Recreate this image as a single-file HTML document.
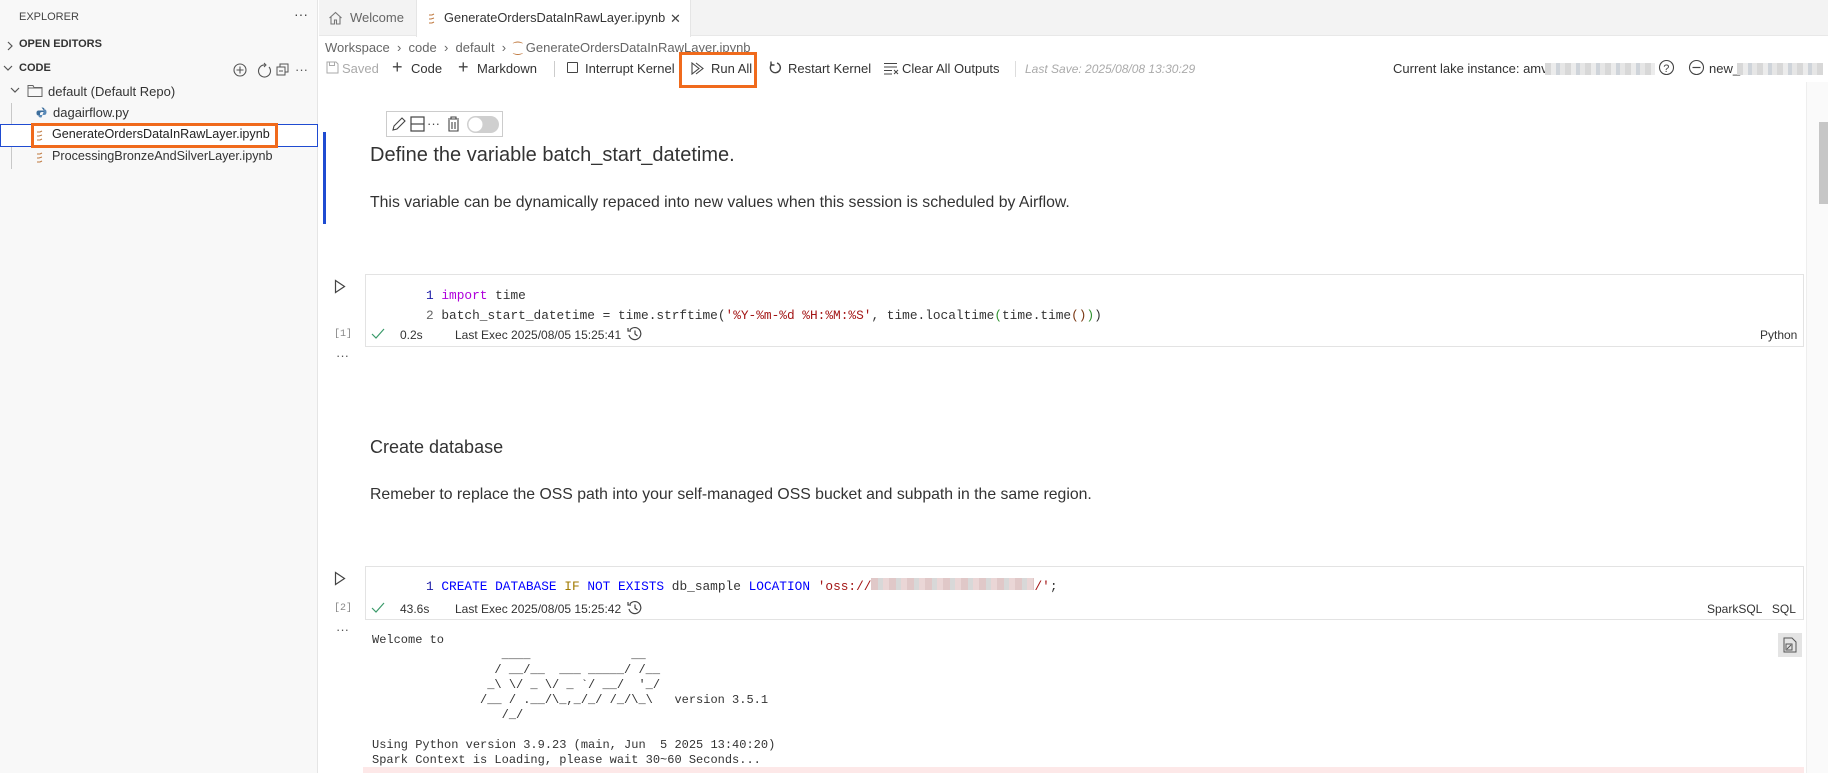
<!DOCTYPE html>
<html><head><meta charset="utf-8">
<style>
*{margin:0;padding:0;box-sizing:border-box}
body{width:1828px;height:773px;overflow:hidden;background:#fff;font-family:"Liberation Sans",sans-serif;color:#333;position:relative;font-size:13px}
.a{position:absolute;white-space:pre}
.mono{font-family:"Liberation Mono",monospace}
.blur{position:absolute;background:repeating-linear-gradient(90deg,#d8d8d8 0 6px,#ececec 6px 11px,#cfd4da 11px 15px,#e6e6e6 15px 20px)}
svg{position:absolute}
</style></head><body>
<!-- sidebar -->
<div class="a" style="left:0;top:0;width:318px;height:773px;background:#f8f8f8;border-right:1px solid #e5e5e5"></div>
<div class="a" style="left:19px;top:11px;font-size:11px;color:#444">EXPLORER</div>
<div class="a" style="left:294px;top:6px;font-size:14px;color:#444">···</div>
<svg style="left:5px;top:40px" width="10" height="12"><path d="M3 2l4 4-4 4" fill="none" stroke="#555" stroke-width="1.2"/></svg>
<div class="a" style="left:19px;top:38px;font-size:11px;font-weight:bold;color:#333">OPEN EDITORS</div>
<svg style="left:3px;top:64px" width="12" height="10"><path d="M1 2l4 4 4-4" fill="none" stroke="#555" stroke-width="1.2"/></svg>
<div class="a" style="left:19px;top:62px;font-size:11px;font-weight:bold;color:#333">CODE</div>
<svg style="left:232px;top:62px" width="80" height="16"><circle cx="8" cy="8" r="6" fill="none" stroke="#555" stroke-width="1.1"/><path d="M8 4.5v7M4.5 8h7" stroke="#555" stroke-width="1.1"/><path d="M33 3a6 6 0 1 0 4 2" fill="none" stroke="#555" stroke-width="1.1"/><path d="M32 1l2 2-2 2" fill="none" stroke="#555" stroke-width="1"/><rect x="45" y="5" width="8" height="8" fill="none" stroke="#555"/><path d="M48 5V2h8v8h-3M47 9h4" fill="none" stroke="#555"/><text x="63" y="12" font-size="13" fill="#555" font-family="Liberation Sans">···</text></svg>
<svg style="left:10px;top:86px" width="12" height="10"><path d="M1 2l4 4 4-4" fill="none" stroke="#555" stroke-width="1.2"/></svg>
<svg style="left:27px;top:84px" width="16" height="14"><path d="M1 1.5h5l1 2h8v9H1z" fill="none" stroke="#666"/><path d="M1 4h14" stroke="#666"/></svg>
<div class="a" style="left:48px;top:84px;font-size:13px;color:#333">default (Default Repo)</div>
<div class="a" style="left:11px;top:103px;width:1px;height:66px;background:#c8c8c8"></div>
<svg style="left:36px;top:107px" width="11" height="11"><path d="M5.5 0.5c3 0 3 1 3 3H3c-2 0-2.5 1-2.5 2.5S1 8.5 3 8.5h1V6.5c0-1 1-1.5 2-1.5h3" fill="#3d6e9c"/><path d="M5.5 10.5c-3 0-3-1-3-2.5h5.5c2 0 2.5-1.5 2.5-3s-.5-2.5-2-2.5" fill="#5a8ab8"/></svg>
<div class="a" style="left:53px;top:105px;font-size:13px;color:#333">dagairflow.py</div>
<div class="a" style="left:0;top:124px;width:318px;height:23px;border:1px solid #1f4bd1;background:#fff"></div>
<div class="a" style="left:31px;top:123px;width:247px;height:25px;border:3px solid #f06a1c"></div>
<svg style="left:36px;top:130px" width="8" height="11"><path d="M1 2h3l2-1M1 6h2l3 -1M1 10h3l2-1" fill="none" stroke="#c07a40" stroke-width="1"/></svg>
<div class="a" style="left:52px;top:127px;font-size:12.6px;color:#222">GenerateOrdersDataInRawLayer.ipynb</div>
<svg style="left:36px;top:152px" width="8" height="11"><path d="M1 2h3l2-1M1 6h2l3 -1M1 10h3l2-1" fill="none" stroke="#c07a40" stroke-width="1"/></svg>
<div class="a" style="left:52px;top:149px;font-size:12.6px;color:#333">ProcessingBronzeAndSilverLayer.ipynb</div>

<!-- tabs -->
<div class="a" style="left:319px;top:0;width:1509px;height:36px;background:#f3f3f3;border-bottom:1px solid #e8e8e8"></div>
<svg style="left:328px;top:11px" width="15" height="14"><path d="M1.5 7L7.5 1.5 13.5 7M3 6v7h3.5V9h2v4H12V6" fill="none" stroke="#777" stroke-width="1.1"/></svg>
<div class="a" style="left:350px;top:10px;font-size:13px;color:#666">Welcome</div>
<div class="a" style="left:416px;top:0;width:275px;height:37px;background:#fff;border-left:1px solid #e5e5e5;border-right:1px solid #e5e5e5"></div>
<svg style="left:428px;top:13px" width="8" height="11"><path d="M1 2h3l2-1M1 6h2l3 -1M1 10h3l2-1" fill="none" stroke="#c07a40" stroke-width="1"/></svg>
<div class="a" style="left:444px;top:10px;font-size:12.8px;color:#333">GenerateOrdersDataInRawLayer.ipynb</div>
<div class="a" style="left:670px;top:11px;font-size:13px;color:#444">✕</div>

<!-- breadcrumb -->
<div class="a" style="left:325px;top:40px;font-size:13px;color:#666">Workspace  ›  code  ›  default  ›  <span style="color:#c07a40;font-size:11px">⁐</span> GenerateOrdersDataInRawLayer.ipynb</div>

<!-- toolbar -->
<svg style="left:326px;top:61px" width="13" height="13"><path d="M1 1h9l2 2v9H1z" fill="none" stroke="#aaa"/><rect x="3.5" y="1" width="5" height="3.5" fill="none" stroke="#aaa"/></svg>
<div class="a" style="left:342px;top:61px;font-size:13px;color:#aaa">Saved</div>
<div class="a" style="left:392px;top:57px;font-size:18px;color:#444;font-weight:300">+</div>
<div class="a" style="left:411px;top:61px;font-size:13px;color:#333">Code</div>
<div class="a" style="left:458px;top:57px;font-size:18px;color:#444">+</div>
<div class="a" style="left:477px;top:61px;font-size:13px;color:#333">Markdown</div>
<div class="a" style="left:554px;top:61px;width:1px;height:16px;background:#ccc"></div>
<div class="a" style="left:567px;top:62px;width:11px;height:11px;border:1.2px solid #444;border-radius:1px"></div>
<div class="a" style="left:585px;top:61px;font-size:13px;color:#333">Interrupt Kernel</div>
<div class="a" style="left:679px;top:52px;width:78px;height:36px;border:3px solid #f06a1c"></div>
<svg style="left:691px;top:62px" width="16" height="13"><path d="M1 1l7 5.5-7 5.5z M5 1l7 5.5-7 5.5" fill="none" stroke="#444" stroke-width="1.1"/></svg>
<div class="a" style="left:711px;top:61px;font-size:13px;color:#333">Run All</div>
<svg style="left:768px;top:61px" width="14" height="14"><path d="M4 3a5 5 0 1 0 5-1" fill="none" stroke="#444" stroke-width="1.4"/><path d="M3 0.5v3.5h3.5" fill="none" stroke="#444" stroke-width="1.4"/></svg>
<div class="a" style="left:788px;top:61px;font-size:13px;color:#333">Restart Kernel</div>
<svg style="left:883px;top:62px" width="16" height="13"><path d="M1 1.5h13M1 5h13M1 8.5h8M1 12h8M11 8l4 4M15 8l-4 4" fill="none" stroke="#444" stroke-width="1"/></svg>
<div class="a" style="left:902px;top:61px;font-size:13px;color:#333">Clear All Outputs</div>
<div class="a" style="left:1015px;top:61px;width:1px;height:16px;background:#ddd"></div>
<div class="a" style="left:1025px;top:62px;font-size:12px;color:#aaa;font-style:italic">Last Save: 2025/08/08 13:30:29</div>
<div class="a" style="left:1393px;top:61px;font-size:13px;color:#333">Current lake instance: amv</div>
<div class="blur" style="left:1545px;top:63px;width:110px;height:12px"></div>
<svg style="left:1658px;top:59px" width="17" height="17"><circle cx="8.5" cy="8.5" r="7" fill="none" stroke="#444" stroke-width="1.1"/><text x="5.3" y="13" font-size="11" fill="#444" font-family="Liberation Sans">?</text></svg>
<svg style="left:1688px;top:59px" width="17" height="17"><circle cx="8.5" cy="8.5" r="7" fill="none" stroke="#444" stroke-width="1.1"/><path d="M4.5 8.5h8" stroke="#444" stroke-width="1.2"/></svg>
<div class="a" style="left:1709px;top:61px;font-size:13px;color:#333">new_</div>
<div class="blur" style="left:1737px;top:63px;width:86px;height:12px"></div>

<!-- scrollbar -->
<div class="a" style="left:1806px;top:82px;width:22px;height:691px;background:#fafafa;border-left:1px solid #eee"></div>
<div class="a" style="left:1819px;top:122px;width:9px;height:82px;background:#c6c6c6"></div>

<!-- markdown cell 1 -->
<div class="a" style="left:386px;top:111px;width:117px;height:26px;border:1px solid #ccc;background:#fff"></div>
<svg style="left:391px;top:115px" width="110" height="18"><path d="M2 15l1-4 8-8 3 3-8 8z" fill="none" stroke="#444" stroke-width="1.1"/><rect x="20" y="2" width="13" height="14" fill="none" stroke="#444" stroke-width="1.2"/><path d="M20 9h13" stroke="#444" stroke-width="1.2"/><text x="36" y="13" font-size="13" fill="#444" font-family="Liberation Sans">···</text><path d="M57 4h11M60 4V2h5v2M58 5v11h9V5M61 7v7M64 7v7" fill="none" stroke="#444" stroke-width="1.1"/><rect x="76" y="1" width="32" height="17" rx="8.5" fill="#cfcfcf"/><circle cx="84.5" cy="9.5" r="7" fill="#fff"/></svg>
<div class="a" style="left:323px;top:132px;width:3px;height:92px;background:#1f4bd1"></div>
<div class="a" style="left:370px;top:144px;font-size:20px;color:#333">Define the variable batch_start_datetime.</div>
<div class="a" style="left:370px;top:194px;font-size:15.8px;color:#333">This variable can be dynamically repaced into new values when this session is scheduled by Airflow.</div>

<!-- code cell 1 -->
<svg style="left:334px;top:279px" width="12" height="15"><path d="M1.5 1.5l9 6-9 6z" fill="none" stroke="#444" stroke-width="1.2"/></svg>
<div class="a" style="left:365px;top:274px;width:1439px;height:73px;border:1px solid #e3e3e3"></div>
<div class="a mono" style="left:426px;top:286px;font-size:12.8px;line-height:20px;color:#333"><span style="color:#1a1aa6">1</span> <span style="color:#af00db">import</span> time
<span style="color:#666">2</span> batch_start_datetime = time.strftime(<span style="color:#a31515">'%Y-%m-%d %H:%M:%S'</span>, time.localtime<span style="color:#319331">(</span>time.time<span style="color:#7b3814">()</span><span style="color:#319331">)</span>)</div>
<div class="a mono" style="left:334px;top:329px;font-size:10px;color:#888">[1]</div>
<svg style="left:371px;top:328px" width="14" height="12"><path d="M1 6l4 4 8-9" fill="none" stroke="#3a9a6a" stroke-width="1.2"/></svg>
<div class="a" style="left:400px;top:328px;font-size:12px;color:#333">0.2s</div>
<div class="a" style="left:455px;top:328px;font-size:12px;color:#333">Last Exec 2025/08/05 15:25:41</div>
<svg style="left:627px;top:326px" width="16" height="16"><path d="M3 4a6 6 0 1 1-1 5" fill="none" stroke="#444" stroke-width="1.2"/><path d="M1 2v3h3M8 4.5V8l2.5 2" fill="none" stroke="#444" stroke-width="1.2"/></svg>
<div class="a" style="left:1760px;top:328px;font-size:12px;color:#333">Python</div>
<div class="a" style="left:336px;top:348px;font-size:13px;color:#555">···</div>

<!-- markdown cell 2 -->
<div class="a" style="left:370px;top:437px;font-size:18px;color:#333">Create database</div>
<div class="a" style="left:370px;top:486px;font-size:15.8px;color:#333">Remeber to replace the OSS path into your self-managed OSS bucket and subpath in the same region.</div>

<!-- code cell 2 -->
<svg style="left:334px;top:571px" width="12" height="15"><path d="M1.5 1.5l9 6-9 6z" fill="none" stroke="#444" stroke-width="1.2"/></svg>
<div class="a" style="left:365px;top:566px;width:1439px;height:54px;border:1px solid #e3e3e3"></div>
<div class="a mono" style="left:426px;top:577px;font-size:12.8px;line-height:20px;color:#333"><span style="color:#1a1aa6">1</span> <span style="color:#0000ff">CREATE DATABASE</span> <span style="color:#a07a00">IF</span> <span style="color:#0000ff">NOT EXISTS</span> db_sample <span style="color:#0000ff">LOCATION</span> <span style="color:#a31515">'oss://</span><span style="display:inline-block;width:163px;height:12px;background:repeating-linear-gradient(90deg,#e0c8c8 0 7px,#d8d8d8 7px 12px,#ead6d6 12px 18px)"></span><span style="color:#a31515">/'</span>;</div>
<div class="a mono" style="left:334px;top:603px;font-size:10px;color:#888">[2]</div>
<svg style="left:371px;top:602px" width="14" height="12"><path d="M1 6l4 4 8-9" fill="none" stroke="#3a9a6a" stroke-width="1.2"/></svg>
<div class="a" style="left:400px;top:602px;font-size:12px;color:#333">43.6s</div>
<div class="a" style="left:455px;top:602px;font-size:12px;color:#333">Last Exec 2025/08/05 15:25:42</div>
<svg style="left:627px;top:600px" width="16" height="16"><path d="M3 4a6 6 0 1 1-1 5" fill="none" stroke="#444" stroke-width="1.2"/><path d="M1 2v3h3M8 4.5V8l2.5 2" fill="none" stroke="#444" stroke-width="1.2"/></svg>
<div class="a" style="left:1707px;top:602px;font-size:12px;color:#333">SparkSQL   SQL</div>
<div class="a" style="left:336px;top:622px;font-size:13px;color:#555">···</div>

<!-- output -->
<div class="a" style="left:1778px;top:633px;width:24px;height:24px;background:#e4e4e4"></div>
<svg style="left:1783px;top:637px" width="14" height="16"><path d="M1 1h8l4 4v10H1z" fill="none" stroke="#555"/><rect x="3" y="7" width="6" height="6" fill="none" stroke="#555"/><path d="M4 12l4-4" stroke="#555"/></svg>
<div class="a mono" style="left:372px;top:633px;font-size:12px;line-height:15px;color:#333">Welcome to
                  ____              __
                 / __/__  ___ _____/ /__
                _\ \/ _ \/ _ `/ __/  '_/
               /__ / .__/\_,_/_/ /_/\_\   version 3.5.1
                  /_/

Using Python version 3.9.23 (main, Jun  5 2025 13:40:20)
Spark Context is Loading, please wait 30~60 Seconds...</div>
<div class="a" style="left:363px;top:767px;width:1441px;height:6px;background:#fde8e8"></div>
</body></html>
